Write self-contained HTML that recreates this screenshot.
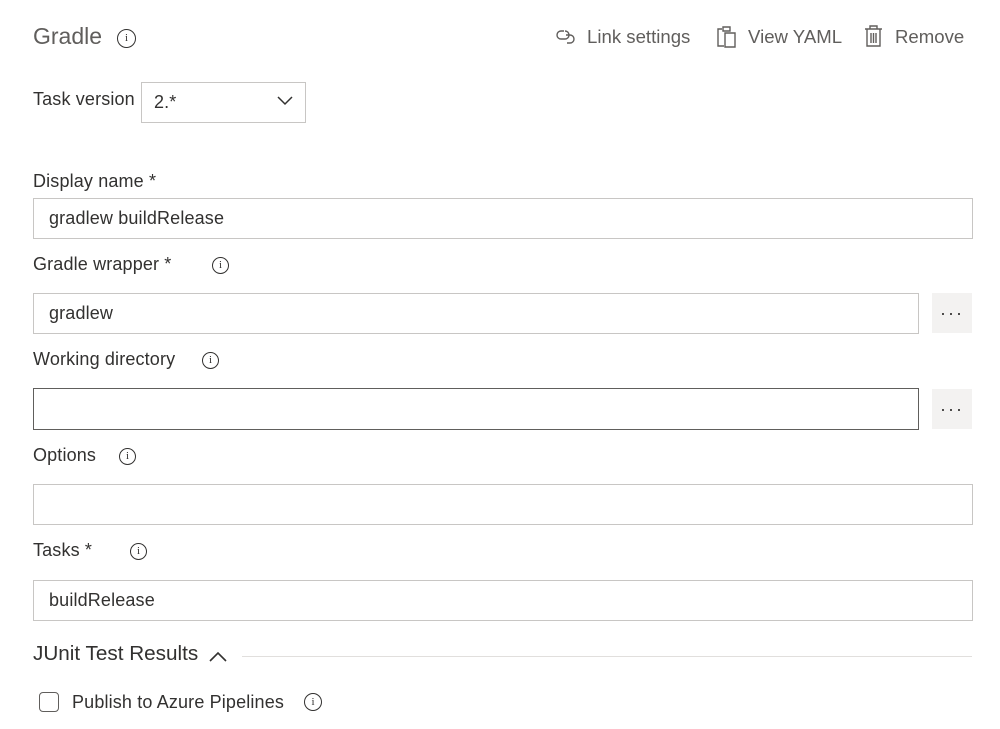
<!DOCTYPE html>
<html><head><style>
body{margin:0;width:1000px;height:729px;background:#fff;font-family:"Liberation Sans",sans-serif;color:#323130;position:relative;overflow:hidden}
.a{position:absolute;white-space:nowrap}
.lbl{font-size:18px;letter-spacing:0.15px;color:#323130}
.inp{position:absolute;border:1px solid #c8c6c4;box-sizing:border-box;background:#fff;font-size:18px;letter-spacing:0.15px;padding-left:15px;display:flex;align-items:center}
.btn{position:absolute;width:40px;height:40px;background:#f3f2f1;display:flex;align-items:center;justify-content:center;font-size:18px;letter-spacing:2px;color:#323130}
.i{position:absolute;width:17px;height:17px;border:1.3px solid #323130;border-radius:50%;box-sizing:border-box;font-size:11px;text-align:center;line-height:15px;font-family:"Liberation Serif",serif}
</style></head><body>
<div class="a" style="left:33px;top:23px;font-size:23px;color:#605e5c">Gradle</div>
<div class="i" style="left:117px;top:29px;width:19px;height:19px;line-height:17px">i</div>

<svg class="a" style="left:555px;top:27px" width="24" height="18" viewBox="0 0 24 18" fill="none" stroke="#605e5c" stroke-width="1.4"><path d="M9 4H6a4 4 0 0 0 0 8h3M11 8h4a4 4 0 0 1 0 8h-3M7 12h3a4 4 0 0 0 0-8"/></svg>
<div class="a" style="left:587px;top:26px;font-size:18.6px;color:#605e5c">Link settings</div>
<svg class="a" style="left:716px;top:25px" width="22" height="24" viewBox="0 0 22 24" fill="none" stroke="#605e5c" stroke-width="1.4"><path d="M6 4H2v17h6M7 2h7v4H7zM9 8h10v14H9z"/></svg>
<div class="a" style="left:748px;top:26px;font-size:18.6px;color:#605e5c">View YAML</div>
<svg class="a" style="left:864px;top:25px" width="19" height="22" viewBox="0 0 19 22" fill="none" stroke="#605e5c" stroke-width="1.4"><path d="M1 4h17M6 4V1h7v3M3 4v17h13V4M7 8v10M9.5 8v10M12 8v10"/></svg>
<div class="a" style="left:895px;top:26px;font-size:18.6px;color:#605e5c">Remove</div>

<div class="a lbl" style="left:33px;top:89px">Task version</div>
<div class="inp" style="left:141px;top:82px;width:165px;height:41px;padding-left:12px">2.*</div>
<svg class="a" style="left:277px;top:96px" width="16" height="10" viewBox="0 0 16 10" fill="none" stroke="#323130" stroke-width="1.5"><path d="M1 1l7 7 7-7"/></svg>

<div class="a lbl" style="left:33px;top:171px">Display name *</div>
<div class="inp" style="left:33px;top:198px;width:940px;height:41px">gradlew buildRelease</div>

<div class="a lbl" style="left:33px;top:254px">Gradle wrapper *</div>
<div class="i" style="left:212px;top:257px">i</div>
<div class="inp" style="left:33px;top:293px;width:886px;height:41px">gradlew</div>
<div class="btn" style="left:932px;top:293px">···</div>

<div class="a lbl" style="left:33px;top:349px">Working directory</div>
<div class="i" style="left:202px;top:352px">i</div>
<div class="inp" style="left:33px;top:388px;width:886px;height:42px;border-color:#605e5c"></div>
<div class="btn" style="left:932px;top:389px">···</div>

<div class="a lbl" style="left:33px;top:445px">Options</div>
<div class="i" style="left:119px;top:448px">i</div>
<div class="inp" style="left:33px;top:484px;width:940px;height:41px"></div>

<div class="a lbl" style="left:33px;top:540px">Tasks *</div>
<div class="i" style="left:130px;top:543px">i</div>
<div class="inp" style="left:33px;top:580px;width:940px;height:41px">buildRelease</div>

<div class="a" style="left:33px;top:642px;font-size:20.7px">JUnit Test Results</div>
<svg class="a" style="left:209px;top:651px" width="18" height="11" viewBox="0 0 18 11" fill="none" stroke="#323130" stroke-width="1.6"><path d="M1 10l8-8 8 8"/></svg>
<div class="a" style="left:242px;top:656px;width:730px;border-top:1px solid #e1dfdd"></div>

<div class="a" style="left:39px;top:692px;width:20px;height:20px;border:1.3px solid #605e5c;border-radius:4px;box-sizing:border-box"></div>
<div class="a lbl" style="left:72px;top:692px">Publish to Azure Pipelines</div>
<div class="i" style="left:304px;top:693px;width:18px;height:18px;line-height:16px">i</div>
</body></html>
